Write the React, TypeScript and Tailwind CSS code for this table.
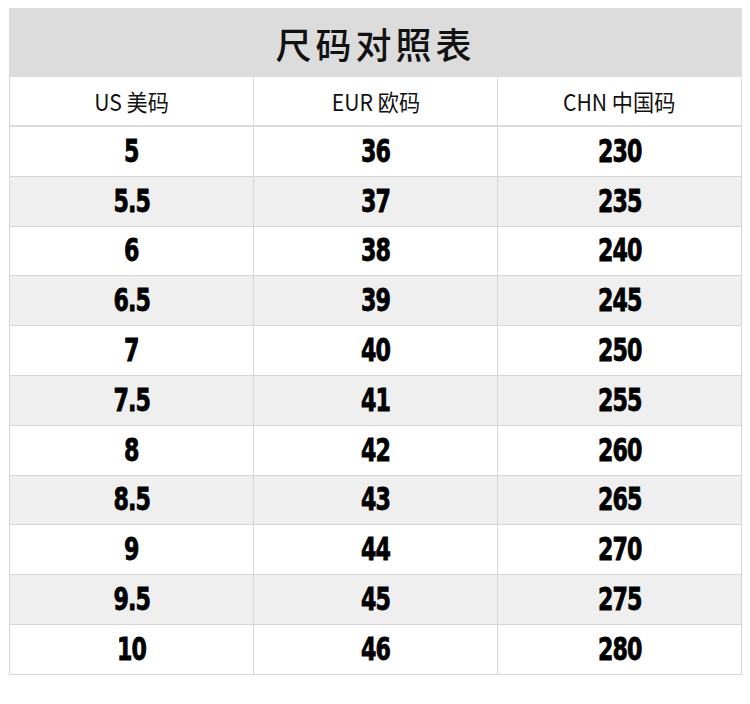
const rows: [string, string, string][] = [
  ["5", "36", "230"],
  ["5.5", "37", "235"],
  ["6", "38", "240"],
  ["6.5", "39", "245"],
  ["7", "40", "250"],
  ["7.5", "41", "255"],
  ["8", "42", "260"],
  ["8.5", "43", "265"],
  ["9", "44", "270"],
  ["9.5", "45", "275"],
  ["10", "46", "280"],
];

const cjk = "font-['Noto_Sans_CJK_SC','Noto_Sans',sans-serif]";
const num = "font-['DejaVu_Sans',sans-serif]";

export default function App() {
  return (
    <div className="w-[750px] h-[704px] bg-white pt-[8px] px-[9px]">
      <div className="w-[733px]">
        <div
          className={`h-[69px] bg-[#dcdcdc] flex items-center justify-center text-[36px] font-medium tracking-[4px] text-[#111] ${cjk}`}
        >
          尺码对照表
        </div>
        <div className="border-l border-[#d6d6d6]">
          <div className={`grid grid-cols-3 h-[50px] text-[23px] text-[#111] ${cjk}`}>
            {["US 美码", "EUR 欧码", "CHN 中国码"].map((h) => (
              <div
                key={h}
                className="flex items-center justify-center border-r border-b-2 border-[#dcdcdc]"
              >
                <span className="inline-block scale-x-[0.92]">{h}</span>
              </div>
            ))}
          </div>
          {rows.map((r, i) => (
            <div
              key={r[0]}
              className={`grid grid-cols-3 h-[49.8px] ${i % 2 === 1 ? "bg-[#efefef]" : "bg-white"}`}
            >
              {r.map((v, j) => (
                <div
                  key={j}
                  className="flex items-center justify-center pt-[1px] border-r border-b border-[#d6d6d6]"
                >
                  <span
                    className={`inline-block text-[28px] font-black font-stretch-condensed tracking-[-1px] text-black scale-x-[0.88] scale-y-[1.12] [-webkit-text-stroke:0.7px_black] ${num}`}
                  >
                    {v}
                  </span>
                </div>
              ))}
            </div>
          ))}
        </div>
      </div>
    </div>
  );
}
